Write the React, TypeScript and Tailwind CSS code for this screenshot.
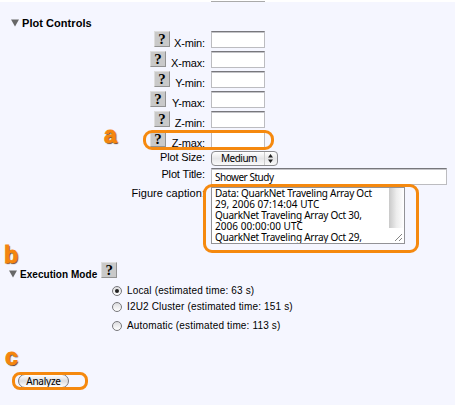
import type { ReactNode } from "react";

const sans = "font-['Liberation_Sans',Arial,sans-serif]";
const field =
  "border border-[#bcbcc0] border-t-[#77777c] bg-white shadow-[inset_0_1px_0_#c4c4c8]";

function Help() {
  return (
    <span className="flex h-4 w-4 shrink-0 items-center justify-center border border-[#dedede] border-b-[#929292] border-r-[#929292] bg-[#c9c9c9] font-['Liberation_Serif',serif] text-[15px] leading-none font-bold text-black">
      ?
    </span>
  );
}

function RangeRow({ name, wide }: { name: string; wide?: boolean }) {
  return (
    <div className="flex h-5">
      <div className={`flex w-[205px] justify-between ${wide ? "pl-[150px]" : "pl-[154px]"}`}>
        <Help />
        <span className="mt-[6px] leading-[13px] tracking-[-0.15px]">{name}:</span>
      </div>
      <div className={`ml-[6px] h-[17px] w-[54px] ${field}`} />
    </div>
  );
}

function Label({ children }: { children: ReactNode }) {
  return <span className="w-[205px] text-right leading-[13px] tracking-[-0.15px]">{children}</span>;
}

function Triangle() {
  return (
    <svg width="8" height="8" viewBox="0 0 8 8" className="shrink-0">
      <path d="M0 .5h8L4 7.5z" fill="#686868" />
    </svg>
  );
}

function Choice({ text, on }: { text: string; on?: boolean }) {
  return (
    <div className="flex h-[13px] items-center gap-[5px]">
      <span className="flex h-[10px] w-[10px] items-center justify-center rounded-full border border-[#77777b] bg-gradient-to-b from-[#dcdcdf] to-white">
        {on && <span className="h-1 w-1 rounded-full bg-[#222]" />}
      </span>
      <span className="text-[10px] leading-[13px] tracking-[0.16px] whitespace-nowrap">{text}</span>
    </div>
  );
}

function Letter({ children, place }: { children: string; place: string }) {
  return (
    <span
      className={`absolute text-[23px] leading-[28px] font-bold text-[#f5860d] [-webkit-text-stroke:0.8px_#f5860d] [text-shadow:1px_1px_1px_#333] ${place}`}
    >
      {children}
    </span>
  );
}

export default function App() {
  return (
    <div className={`relative h-[405px] w-[455px] overflow-hidden bg-[#f5f6ff] text-[11px] text-black ${sans}`}>
      <div className="h-[2px] bg-white">
        <div className="ml-[211px] h-[2px] w-[54px] border-b border-[#aaa]" />
      </div>
      <div className="flex h-[29px] gap-[3px] pt-[14px] pl-[11px]">
        <span className="pt-[3px]">
          <Triangle />
        </span>
        <b className="leading-[14px] tracking-[0.05px]">Plot Controls</b>
      </div>
      <RangeRow name="X-min" />
      <RangeRow name="X-max" wide />
      <RangeRow name="Y-min" />
      <RangeRow name="Y-max" wide />
      <RangeRow name="Z-min" />
      <RangeRow name="Z-max" wide />
      <div className="flex h-[17px]">
        <Label>Plot Size:</Label>
        <div className="ml-[6px] flex h-[15px] w-[67px] items-center justify-between rounded-[4px] border border-[#8b8b8f] bg-gradient-to-b from-white via-[#e6e6e8] to-[#fafafa] pl-[9px] font-['Noto_Sans',sans-serif] text-[10px]">
          <span className="leading-[13px] tracking-[-0.5px]">Medium</span>
          <span className="flex h-full w-[13px] items-center border-l border-[#ccc] pl-[3px]">
            <svg width="5" height="9" viewBox="0 0 5 9">
              <path d="M0 3.5 2.5 0 5 3.5zM0 5.5h5L2.5 9z" fill="#222" />
            </svg>
          </span>
        </div>
      </div>
      <div className="flex h-[19px]">
        <Label>Plot Title:</Label>
        <div className={`ml-[6px] h-[17px] w-[236px] pt-[2px] pl-[3px] font-['Noto_Sans',sans-serif] text-[10px] leading-[13px] tracking-[-0.48px] ${field}`}>
          Shower Study
        </div>
      </div>
      <div className="flex h-[75px]">
        <span className="w-[205px] text-right leading-[13px] tracking-[0.05px]">Figure caption:</span>
        <div className="relative ml-[6px] flex h-[57px] w-[194px] justify-between overflow-hidden border border-[#929296] bg-white">
          <div className="pl-[3px] font-['Noto_Sans',sans-serif] text-[10px] leading-[11px] tracking-[-0.25px] whitespace-nowrap">
            <div>Data: QuarkNet Traveling Array Oct</div>
            <div className="tracking-[0.04px]">29, 2006 07:14:04 UTC</div>
            <div>QuarkNet Traveling Array Oct 30,</div>
            <div className="tracking-[0.06px]">2006 00:00:00 UTC</div>
            <div>QuarkNet Traveling Array Oct 29,</div>
          </div>
          <div className="flex w-[15px] flex-col items-end">
            <div className="h-[40px] w-[15px] bg-gradient-to-r from-[#c9c9c9] via-[#ededed] to-white" />
            <svg width="9" height="9" viewBox="0 0 9 9" className="mt-[5px] mr-px">
              <path d="M1 8 8 1M5 8 8 5" stroke="#666" strokeWidth=".8" />
            </svg>
          </div>
        </div>
      </div>
      <div className="flex h-[22px] pl-[9px]">
        <span className="pt-[8px]">
          <Triangle />
        </span>
        <b className="ml-[3px] pt-[6px] text-[10px] leading-[14px] tracking-[0.04px]">Execution Mode</b>
        <span className="ml-[4px]">
          <Help />
        </span>
      </div>
      <div className="pl-[112px]">
        <Choice text="Local (estimated time: 63 s)" on />
        <div className="h-[3px]" />
        <Choice text="I2U2 Cluster (estimated time: 151 s)" />
        <div className="h-[6px]" />
        <Choice text="Automatic (estimated time: 113 s)" />
      </div>
      <div className="mt-[42px] ml-[18px] flex h-[14px] w-[51px] items-center justify-center rounded-full border border-[#77777b] bg-gradient-to-b from-white via-[#dddddf] to-white font-['Noto_Sans',sans-serif] text-[10px] leading-[12px] tracking-[-0.25px]">
        Analyze
      </div>

      <div className="absolute top-[130px] left-[143px] h-[20px] w-[131px] rounded-[9px] border-3 border-[#f5890f]" />
      <div className="absolute top-[184px] left-[203px] h-[69px] w-[216px] rounded-[9px] border-3 border-[#f5890f]" />
      <div className="absolute top-[372px] left-[12px] h-[18px] w-[76px] rounded-[8px] border-3 border-[#f5890f]" />
      <Letter place="left-[104px] top-[121px]">a</Letter>
      <Letter place="left-[4px] top-[241px]">b</Letter>
      <Letter place="left-[5px] top-[343px]">c</Letter>
    </div>
  );
}
